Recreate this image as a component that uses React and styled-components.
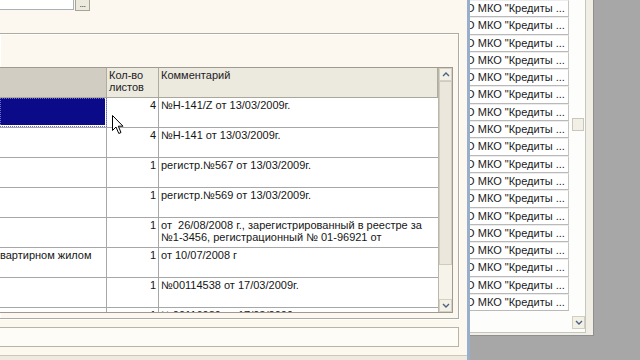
import styled, { createGlobalStyle } from "styled-components";

const GlobalStyle = createGlobalStyle`
  html, body {
    margin: 0;
    padding: 0;
    background: #a7a7a7;
  }
  body {
    font-family: "Liberation Sans", Arial, sans-serif;
    font-size: 11px;
    color: #161616;
  }
`;

const Screen = styled.div`
  width: 640px;
  height: 360px;
  display: flex;
  align-items: flex-start;
  overflow: hidden;
  background: #a7a7a7;
`;

const FormPane = styled.div`
  position: relative;
  width: 467px;
  height: 360px;
  flex: none;
  display: flex;
  flex-direction: column;
  overflow: hidden;
  background: #fcf8ef;
  border-right: 3px solid #98afcb;
`;

const TopRow = styled.div`
  height: 33px;
  flex: none;
  display: flex;
  align-items: flex-start;
`;

const Field = styled.div`
  width: 73px;
  height: 9px;
  background: #fff;
  border-right: 1px solid #a9b0b8;
  border-bottom: 1px solid #a9b0b8;
`;

const DotsButton = styled.div`
  width: 13px;
  height: 10px;
  margin-left: 1px;
  background: #ece9df;
  border: 1px solid #a6a397;
  border-top: none;
  font-size: 9px;
  line-height: 8px;
  text-align: center;
  letter-spacing: -0.5px;
  color: #333;
`;

const GroupBox = styled.div`
  height: 286px;
  flex: none;
  margin: 0 8px 0 -1px;
  padding: 33px 5px 5px 0;
  box-sizing: border-box;
  border: 1px solid #aeab9f;
  box-shadow: inset 1px 1px 0 #fff, 1px 1px 0 #fff;
`;

const TableBox = styled.div`
  height: 246px;
  margin-left: -1px;
  display: flex;
  box-sizing: border-box;
  border: 1px solid #9d9b91;
  background: #fff;
`;

const Grid = styled.div`
  flex: 1;
  display: flex;
  flex-direction: column;
  overflow: hidden;
`;

const HeaderRow = styled.div`
  height: 30px;
  flex: none;
  display: grid;
  grid-template-columns: 107px 52px 1fr;
  box-sizing: border-box;
  border-bottom: 1px solid #a9a69a;
`;

const HeadCell = styled.div`
  padding: 1px 2px 0;
  line-height: 12px;
  background: ${(p) => (p.$sorted ? "#d1cdc2" : "#ece9df")};
  border-right: 1px solid #aeab9f;
  color: #222;
`;

const Body = styled.div`
  flex: 1;
  overflow: hidden;
`;

const Row = styled.div`
  height: 30px;
  display: grid;
  grid-template-columns: 107px 52px 1fr;
  box-sizing: border-box;
  border-bottom: 1px solid #a7a7a7;
`;

const Cell = styled.div`
  padding: 1px 2px 0;
  line-height: 12px;
  white-space: pre;
  overflow: hidden;
  border-right: 1px solid #a7a7a7;
  text-align: ${(p) => (p.$num ? "right" : "left")};
  text-indent: ${(p) => (p.$clipped ? "-2px" : "0")};
  background: ${(p) => (p.$selected ? "#0b0b8a" : "transparent")};
  outline: ${(p) => (p.$selected ? "1px dotted #6d6dc4" : "none")};
  outline-offset: -1px;
  box-shadow: ${(p) => (p.$selected ? "inset -1px -2px 0 #fff" : "none")};

  &:last-child {
    border-right: none;
  }
`;

const VScroll = styled.div`
  width: 13px;
  flex: none;
  display: flex;
  flex-direction: column;
  border-left: 1px solid #b9b6aa;
  background: #f6f3ea;
`;

const ScrollButton = styled.div`
  height: 13px;
  flex: none;
  display: flex;
  align-items: center;
  justify-content: center;
  background: #f3f0e6;
  border: 1px solid #d4d0c4;
  box-sizing: border-box;
`;

const Thumb = styled.div`
  height: ${(p) => p.$size}px;
  flex: none;
  margin-top: ${(p) => p.$offset}px;
  box-sizing: border-box;
  background: #ebe7dc;
  border: 1px solid #cfcbbf;
`;

const Filler = styled.div`
  flex: 1;
`;

const BottomField = styled.div`
  height: 20px;
  flex: none;
  margin: 8px 8px 0 -1px;
  box-sizing: border-box;
  background: #fefcf6;
  border: 1px solid #b7b4a8;
`;

const Footer = styled.div`
  flex: 1;
  margin-top: 8px;
  border-top: 1px solid #cbc7ba;
  background: #eeeae0;
`;

const Cursor = styled.svg`
  position: absolute;
  left: 112px;
  top: 115px;
`;

const ListPane = styled.div`
  width: 124px;
  height: 336px;
  flex: none;
  display: flex;
  box-sizing: border-box;
  background: #f1eee6;
  border-right: 1px solid #8f8f8f;
  border-bottom: 1px solid #8f8f8f;
`;

const ListBody = styled.div`
  width: 116px;
  height: 333px;
  display: flex;
  box-sizing: border-box;
  background: #fdfdfb;
  border-right: 1px solid #c6c6c0;
  border-bottom: 1px solid #c6c6c0;
`;

const Items = styled.div`
  width: 99px;
  flex: none;
  display: flex;
  flex-direction: column;
  overflow: hidden;
`;

const Item = styled.div`
  height: 17.3px;
  flex: none;
  box-sizing: border-box;
  background: #fff;
  border-bottom: 1px solid #b9b9b9;
  border-right: 1px solid #c4c4c4;
  border-top: 1px solid #ececec;
  line-height: 14px;
  white-space: nowrap;
  overflow: hidden;
  text-indent: -21px;
  color: #1a1a1a;
`;

const ListScroll = styled.div`
  width: 13px;
  flex: none;
  margin-left: 3px;
  display: flex;
  flex-direction: column;
`;

const SmallThumb = styled.div`
  width: 12px;
  height: 13px;
  margin-top: 118px;
  box-sizing: border-box;
  background: #f2efe6;
  border: 1px solid #c9c6ba;
`;

const DownButton = styled.div`
  height: 11px;
  margin-bottom: 3px;
  display: flex;
  align-items: center;
  justify-content: center;
  background: #f3f0e6;
  border: 1px solid #d2cec2;
`;

const Chevron = ({ up }) => (
  <svg width="8" height="5" viewBox="0 0 8 5">
    <polyline
      points={up ? "1,4 4,1 7,4" : "1,1 4,4 7,1"}
      fill="none"
      stroke="#4d6185"
      strokeWidth="1.4"
    />
  </svg>
);

const rows = [
  { num: "4", text: ["№Н-141/Z от 13/03/2009г."], selected: true },
  { num: "4", text: ["№Н-141 от 13/03/2009г."] },
  { num: "1", text: ["регистр.№567 от 13/03/2009г."] },
  { num: "1", text: ["регистр.№569 от 13/03/2009г."] },
  {
    num: "1",
    text: [
      "от  26/08/2008 г., зарегистрированный в реестре за",
      "№1-3456, регистрационный № 01-96921 от",
    ],
  },
  { name: "вартирном жилом", num: "1", text: ["от 10/07/2008 г"] },
  { num: "1", text: ["№00114538 от 17/03/2009г."] },
  { num: "1", text: ["№00116989 от 17/03/2009г."] },
];

const items = Array.from({ length: 18 }, () => "ООО МКО \"Кредиты ...");

const App = () => (
  <>
    <GlobalStyle />
    <Screen>
      <FormPane>
        <TopRow>
          <Field />
          <DotsButton>...</DotsButton>
        </TopRow>
        <GroupBox>
          <TableBox>
            <Grid>
              <HeaderRow>
                <HeadCell $sorted />
                <HeadCell>
                  Кол-во
                  <br />
                  листов
                </HeadCell>
                <HeadCell>Комментарий</HeadCell>
              </HeaderRow>
              <Body>
                {rows.map((r, i) => (
                  <Row key={i}>
                    <Cell $selected={r.selected} $clipped={!!r.name}>
                      {r.name}
                    </Cell>
                    <Cell $num>{r.num}</Cell>
                    <Cell>
                      {r.text.map((t, j) => (
                        <div key={j}>{t}</div>
                      ))}
                    </Cell>
                  </Row>
                ))}
              </Body>
            </Grid>
            <VScroll>
              <ScrollButton>
                <Chevron up />
              </ScrollButton>
              <Thumb $offset={0} $size={184} />
              <Filler />
              <ScrollButton>
                <Chevron />
              </ScrollButton>
            </VScroll>
          </TableBox>
        </GroupBox>
        <BottomField />
        <Footer />
        <Cursor width="13" height="20" viewBox="0 0 13 20">
          <path
            d="M0.5 0.5 L0.5 15.5 L4 12 L6.8 18.5 L9 17.5 L6.3 11.2 L11 11.2 Z"
            fill="#fff"
            stroke="#000"
            strokeWidth="1"
          />
        </Cursor>
      </FormPane>
      <ListPane>
        <ListBody>
          <Items>
            {items.map((t, i) => (
              <Item key={i}>{t}</Item>
            ))}
          </Items>
          <ListScroll>
            <SmallThumb />
            <Filler />
            <DownButton>
              <Chevron />
            </DownButton>
          </ListScroll>
        </ListBody>
      </ListPane>
    </Screen>
  </>
);

export default App;
